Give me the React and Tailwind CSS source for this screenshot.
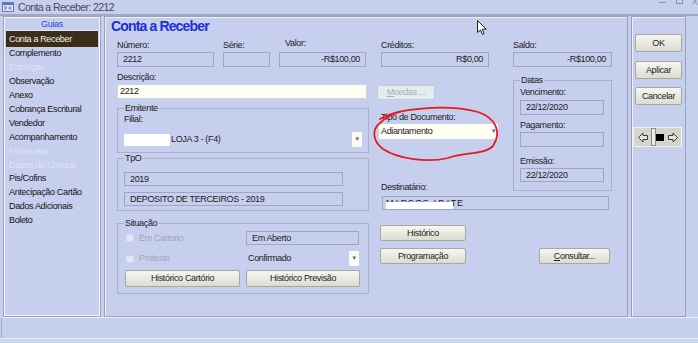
import React from 'react';

const Btn = ({ children, className = '' }) => (
  <div className={`flex items-center justify-center border border-[#a7a89f] rounded-[2px] bg-linear-to-b from-[#f7f7f0] to-[#dcdcd1] text-[#1e1e1e] ${className}`}>
    {children}
  </div>
);

const Field = ({ children, className = '', right }) => (
  <div className={`border border-[#a1a6bf] flex items-center px-[5px] ${right ? 'justify-end' : ''} ${className}`}>
    {children}
  </div>
);

const Label = ({ children, className = '' }) => (
  <div className={`h-[17px] flex items-end pb-[1px] ${className}`}>{children}</div>
);

const Group = ({ title, className = '', children }) => (
  <fieldset className={`border border-[#a9b0cb] px-[6px] ${className}`}>
    <legend className="px-[1px] leading-[10px]">{title}</legend>
    {children}
  </fieldset>
);

const Arrow = ({ className = '' }) => (
  <div className={`w-[10px] h-full bg-[#fbfbf6] flex items-center justify-center text-[6px] text-[#666] ${className}`}>▼</div>
);

const Check = () => <div className="w-[8px] h-[8px] bg-[#e5e8f6] border border-[#d2d6ea]" />;

const guias = [
  ['Complemento', true],
  ['Encargos', false],
  ['Observação', true],
  ['Anexo', true],
  ['Cobrança Escritural', true],
  ['Vendedor', true],
  ['Acompanhamento', true],
  ['Financeira', false],
  ['Dados do Cheque', false],
  ['Pis/Cofins', true],
  ['Antecipação Cartão', true],
  ['Dados Adicionais', true],
  ['Boleto', true],
];

const Sidebar = () => (
  <div className="ml-[3px] w-[98px] h-full border border-[#9ca1b9]">
    <div className="h-full border border-[#f4f5fb] p-[1px] pt-0">
      <div className="h-[13px] flex items-center justify-center text-[#2f3fcc] border-b border-[#e4e7f6]">Guias</div>
      <div className="h-[16px] flex items-center pl-[3px] bg-[#3b2f1b] text-[#f4f0e4]">Conta a Receber</div>
      {guias.map(([name, on]) => (
        <div key={name} className={`h-[13.9px] flex items-center pl-[3px] ${on ? 'text-[#141414]' : 'text-[#dfe3f6]'}`}>
          {name}
        </div>
      ))}
    </div>
  </div>
);

const MainPanel = () => (
  <div className="ml-[3px] w-[524px] h-full border border-[#9ca1b9] shadow-[inset_1px_1px_0_#eef0fa]">
    <div className="h-[18px] pl-[6px] flex items-center text-[14px] tracking-[-0.85px] font-bold text-[#1d2fd6]">Conta a Receber</div>
    <div className="flex">
      {/* left column */}
      <div className="ml-[12px] w-[252px] flex flex-col">
        <div className="flex">
          <div className="w-[97px]">
            <Label>Número:</Label>
            <Field className="h-[15px]">2212</Field>
          </div>
          <div className="ml-[9px] w-[47px]">
            <Label>Série:</Label>
            <Field className="h-[15px]" />
          </div>
          <div className="ml-[9px] w-[87px]">
            <Label className="pl-[6px] pb-[3px]">Valor:</Label>
            <Field className="h-[15px]" right>-R$100,00</Field>
          </div>
        </div>
        <Label>Descrição:</Label>
        <div className="w-[250px] h-[15px] border border-[#cfd2e2] bg-[#fdfdf1] flex items-center px-[2px]">2212</div>

        <Group title="Emitente" className="mt-[4px] pb-[5px]">
          <div className="h-[12px] flex items-center">Filial:</div>
          <div className="mt-[7px] h-[15px] flex items-center">
            <div className="w-[46px] h-[12px] bg-white" />
            <span className="ml-[1px]">LOJA 3 - (F4)</span>
            <Arrow className="ml-auto" />
          </div>
        </Group>

        <Group title="TpO" className="pb-[4px]">
          <Field className="mt-[9px] w-[219px] h-[14px]">2019</Field>
          <Field className="mt-[6px] w-[219px] h-[14px]">DEPOSITO DE TERCEIROS - 2019</Field>
        </Group>

        <Group title="Situação" className="mt-[7px] pb-[6px]">
          <div className="mt-[3px] h-[14px] flex items-center">
            <div className="w-[122px] flex items-center pl-[2px]">
              <Check />
              <span className="ml-[5px] text-[#9fa4b9]">Em Cartorio</span>
            </div>
            <Field className="w-[113px] h-[14px] px-[3px]">Em Aberto</Field>
          </div>
          <div className="mt-[6px] h-[15px] flex items-center">
            <div className="w-[122px] flex items-center pl-[2px]">
              <Check />
              <span className="ml-[5px] text-[#9fa4b9]">Protesto</span>
            </div>
            <div className="w-[113px] h-full flex items-center pl-[2px]">
              Confirmado
              <Arrow className="ml-auto" />
            </div>
          </div>
          <div className="mt-[4px] flex">
            <Btn className="ml-[1px] w-[115px] h-[17px]">Histórico Cartório</Btn>
            <Btn className="ml-[6px] w-[114px] h-[17px]">Histórico Previsão</Btn>
          </div>
        </Group>
      </div>

      {/* right area */}
      <div className="ml-[8px] w-[236px] flex flex-col">
        <div className="flex">
          <div className="ml-[4px] w-[108px]">
            <Label>Créditos:</Label>
            <Field className="h-[15px]" right>R$0,00</Field>
          </div>
          <div className="ml-[24px] w-[99px]">
            <Label>Saldo:</Label>
            <Field className="h-[15px]" right>-R$100,00</Field>
          </div>
        </div>
        <div className="flex items-start">
          <div className="w-[136px] flex flex-col">
            <div className="mt-[18px] w-[58px] h-[15px] border border-[#c3cad4] rounded-[2px] bg-[#e3edef] text-[#a6aeb6] flex items-center justify-center">
              <span><span className="underline">M</span>oedas ...</span>
            </div>
            <div className="mt-[12px] pl-[4px] leading-[10px]">Tipo de Documento:</div>
            <div className="mt-[2px] ml-[2px] w-[119px] h-[15px] bg-[#fdfdf1] flex items-center pl-[2px]">
              Adiantamento
              <Arrow className="ml-auto border-l border-white" />
            </div>
            <div className="mt-[43px] pl-[4px] leading-[10px]">Destinatário:</div>
          </div>
          <Group title="Datas" className="mt-[8px] w-[99px] px-[4px] pb-[8px]">
            <div className="mt-[2px] leading-[10px]">Vencimento:</div>
            <Field className="mt-[3px] w-[84px] h-[15px] px-[3px]">22/12/2020</Field>
            <div className="mt-[5px] leading-[10px]">Pagamento:</div>
            <Field className="mt-[2px] w-[84px] h-[15px]" />
            <div className="mt-[9px] leading-[10px]">Emissão:</div>
            <Field className="mt-[2px] w-[84px] h-[14px] px-[3px]">22/12/2020</Field>
          </Group>
        </div>
        <div className="relative mt-[4px] ml-[5px] w-[227px] h-[14px] border border-[#a1a6bf] overflow-hidden pl-[3px]">
          <span className="tracking-[0.6px] leading-[12px]">MARCOS ABATE</span>
          <div className="absolute left-[3px] top-[5px] w-[67px] h-[8px] bg-white" />
        </div>
        <Btn className="mt-[15px] ml-[3px] w-[86px] h-[16px]">Histórico</Btn>
        <div className="mt-[7px] flex">
          <Btn className="ml-[3px] w-[86px] h-[16px]">Programação</Btn>
          <Btn className="ml-[73px] w-[71px] h-[16px]">
            <span><span className="underline">C</span>onsultar...</span>
          </Btn>
        </div>
      </div>
    </div>
  </div>
);

const ArrowIcon = ({ dir }) => (
  <svg width="10" height="11" viewBox="0 0 10 11">
    <path
      d={dir === 'left' ? 'M0.5 5.5 L5 1 L5 3.5 L9.5 3.5 L9.5 7.5 L5 7.5 L5 10 Z' : 'M9.5 5.5 L5 1 L5 3.5 L0.5 3.5 L0.5 7.5 L5 7.5 L5 10 Z'}
      fill="#e8e8e0"
      stroke="#3a3a3a"
      strokeWidth="1"
      strokeLinejoin="miter"
    />
  </svg>
);

const RightPanel = () => (
  <div className="ml-[3px] w-[55px] h-full border border-[#9ca1b9] shadow-[inset_1px_1px_0_#eef0fa] pt-[17px] flex flex-col">
    <Btn className="ml-[3px] w-[47px] h-[18px]">OK</Btn>
    <Btn className="mt-[9px] ml-[3px] w-[47px] h-[18px]">Aplicar</Btn>
    <Btn className="mt-[8px] ml-[3px] w-[47px] h-[18px]">Cancelar</Btn>
    <div className="mt-[22px] ml-[1px] w-[49px] h-[20px] bg-[#d6d5cb] border border-[#f2f2ec] flex items-center pl-[4px]">
      <ArrowIcon dir="left" />
      <div className="ml-[3px] w-[5px] h-[18px] bg-[#ecebe4] border border-[#8c8c86]" />
      <div className="w-[8px] h-[7px] bg-black" />
      <div className="ml-[4px]">
        <ArrowIcon dir="right" />
      </div>
    </div>
  </div>
);

export default function App() {
  return (
    <div className="relative w-[698px] h-[343px] overflow-hidden bg-[#c7cfee] flex flex-col text-[9px] leading-[11px] tracking-[-0.35px] text-[#1c1c1c] font-['Liberation_Sans',Arial,sans-serif]">
      {/* title bar */}
      <div className="h-[14px] flex items-center pl-[2px]">
        <svg width="12" height="10" viewBox="0 0 12 10">
          <rect x="0.5" y="0.5" width="11" height="9" fill="#dfe6f6" stroke="#6b7cb4" />
          <rect x="1" y="1" width="10" height="2" fill="#5a74c4" />
          <rect x="2" y="4.5" width="3" height="1" fill="#5a74c4" />
          <rect x="2" y="6.5" width="3" height="1" fill="#5a74c4" />
          <rect x="6.5" y="4.5" width="3" height="3" fill="#8aa0da" />
        </svg>
        <span className="ml-[4px] text-[10.5px] tracking-[-0.6px] text-[#44475f]">Conta a Receber: 2212</span>
        <div className="ml-auto self-start flex items-start h-[5px] overflow-hidden">
          <div className="mt-[2px] w-[7px] h-[1px] bg-[#8a91ab]" />
          <div className="ml-[10px] -mt-[3px] w-[7px] h-[7px] border border-[#8a91ab]" />
          <svg className="ml-[9px] -mt-[2px]" width="6" height="7" viewBox="0 0 6 7">
            <path d="M0.5 0.5 L5.5 6.5 M5.5 0.5 L0.5 6.5" stroke="#8a91ab" strokeWidth="1" />
          </svg>
        </div>
      </div>
      <div className="h-[2px] bg-[#a3a8bd]" />
      <div className="flex h-[301px]">
        <Sidebar />
        <MainPanel />
        <RightPanel />
      </div>
      <div className="h-[21px] ml-[1px] border-l border-[#a3a8bd] border-t border-t-[#eef0fa]" />
      <div className="h-[1px] bg-[#e8ebf7]" />
      <div className="flex-1 bg-[#c5daf0]" />

      {/* red annotation */}
      <svg className="absolute left-[368px] top-[102px]" width="136" height="64" viewBox="0 0 136 64">
        <path
          d="M12 17 C30 6 80 2 110 10 C128 16 134 30 125 44 C116 53 96 50 80 56 C60 61 30 57 15 47 C4 39 4 27 12 21 C17 16 24 12 32 10"
          fill="none"
          stroke="#e51a1a"
          strokeWidth="1.8"
          strokeLinecap="round"
        />
      </svg>

      {/* mouse cursor */}
      <svg className="absolute left-[477px] top-[20px]" width="10" height="16" viewBox="0 0 10 16">
        <path d="M0.5 0.5 L0.5 12.5 L3.5 9.8 L5.5 14.5 L7.2 13.7 L5.3 9.2 L9.2 9.2 Z" fill="#fff" stroke="#222" strokeWidth="1" strokeLinejoin="round" />
      </svg>
    </div>
  );
}
